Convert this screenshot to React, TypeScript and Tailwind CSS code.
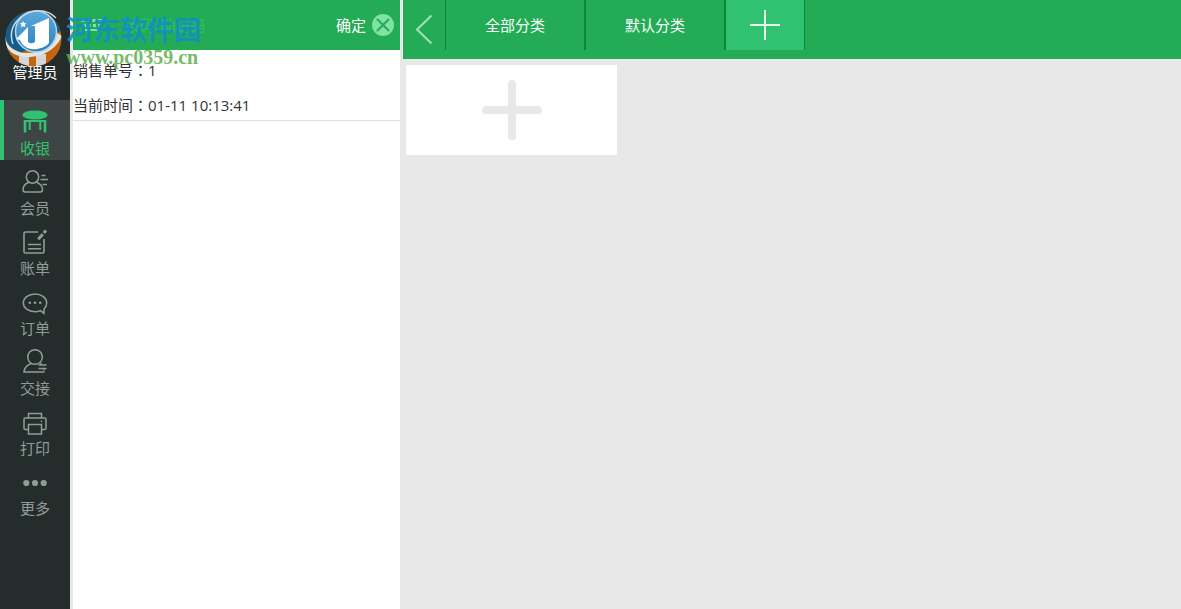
import React, { useState } from 'react';

interface IconProps {
  className?: string;
}

const TableIcon: React.FC<IconProps> = ({ className }) => (
  <svg className={className} viewBox="0 0 26 26" fill="none" stroke="currentColor" aria-hidden="true">
    <ellipse cx="13" cy="6" rx="12.5" ry="4.5" fill="currentColor" stroke="none" />
    <path d="M2 12h22" strokeWidth="2" />
    <path d="M3 11v12.5M23 11v12.5" strokeWidth="2.6" />
    <path d="M7.7 12v9M18.3 12v9" strokeWidth="2" />
  </svg>
);

const MemberIcon: React.FC<IconProps> = ({ className }) => (
  <svg className={className} viewBox="0 0 26 26" fill="none" stroke="currentColor" strokeWidth="1.5" aria-hidden="true">
    <circle cx="10.5" cy="8" r="6.2" />
    <path d="M7 13.3C3 14.7 1 17.5 1 20.8c0 1.6.8 2.200 2.300 2.200h15c1.500 0 2.200-.6 2.200-2.200 0-3.200-2-6-6-7.500" />
    <path d="M19.5 6.500h4M18.500 10.500h7.500M20.500 15.500h4.500" />
  </svg>
);

const BillIcon: React.FC<IconProps> = ({ className }) => (
  <svg className={className} viewBox="0 0 26 26" fill="none" stroke="currentColor" strokeWidth="1.6" aria-hidden="true">
    <path d="M16 3H3.300C2.400 3 2 3.400 2 4.200V22.800c0 .8.4 1.200 1.200 1.200h17.600c.8 0 1.200-.4 1.200-1.200V10" />
    <path d="M6 15.500h13M6 19.800h13" />
    <path d="M16.200 10.300L20.800 5.200M21.800 4L24 1.600" strokeWidth="3" />
  </svg>
);

const OrderIcon: React.FC<IconProps> = ({ className }) => (
  <svg className={className} viewBox="0 0 26 26" fill="none" stroke="currentColor" strokeWidth="1.5" aria-hidden="true">
    <path d="M22 24.300l-3.500-2.600c-1.700.7-3.500 1-5.500 1C6.300 22.700 1.300 18.900 1.300 14S6.300 5 13 5s11.700 4 11.700 9c0 2.400-1 4.500-2.700 6z" />
    <g fill="currentColor" stroke="none">
      <circle cx="7.8" cy="13.800" r="1.3" />
      <circle cx="13" cy="13.800" r="1.3" />
      <circle cx="18.2" cy="13.800" r="1.3" />
    </g>
  </svg>
);

const HandoverIcon: React.FC<IconProps> = ({ className }) => (
  <svg className={className} viewBox="0 0 26 26" fill="none" stroke="currentColor" strokeWidth="1.5" aria-hidden="true">
    <circle cx="13" cy="8" r="7.3" />
    <path d="M9.500 14.500C4.500 16 2.300 18.500 2 23h20.500" />
    <path d="M16.500 16h8M16.500 19.500h8M19 13.700v2.300M22 19.500v2" strokeWidth="1.4" />
  </svg>
);

const PrintIcon: React.FC<IconProps> = ({ className }) => (
  <svg className={className} viewBox="0 0 26 26" fill="none" stroke="currentColor" strokeWidth="1.5" aria-hidden="true">
    <path d="M6.500 9V4.500h13V9" />
    <path d="M6 20.500H3.300c-.9 0-1.300-.4-1.300-1.300V10.300C2 9.400 2.400 9 3.300 9h19.400c.9 0 1.300.4 1.300 1.300v8.900c0 .9-.4 1.300-1.300 1.300H20" />
    <path d="M6.500 15.500h13V25h-13z" />
    <circle cx="19.5" cy="12.300" r=".9" fill="currentColor" stroke="none" />
  </svg>
);

const MoreIcon: React.FC<IconProps> = ({ className }) => (
  <svg className={className} viewBox="0 0 26 26" fill="currentColor" aria-hidden="true">
    <circle cx="4.3" cy="14" r="3.1" />
    <circle cx="13" cy="14" r="3.1" />
    <circle cx="21.7" cy="14" r="3.1" />
  </svg>
);

const KeyboardIcon: React.FC<IconProps> = ({ className }) => (
  <svg className={className} viewBox="0 0 22 14" fill="currentColor" aria-hidden="true">
    <path d="M0 1h4v3H0zM6 1h3v3H6zM11 1h4v3h-4zM17 1h4v3h-4zM2 6h3v3H2zM7 6h3v3H7zM12 6h3v3h-3zM17 6h3v3h-3zM4 11h13v2H4z" />
  </svg>
);

const LogoIcon: React.FC<IconProps> = ({ className }) => (
  <svg className={className} viewBox="0 0 58 58" aria-hidden="true">
    <defs>
      <linearGradient id="sky" x1="0" y1="0" x2="0" y2="1">
        <stop offset="0" stopColor="#5aa9de" />
        <stop offset="1" stopColor="#2d80be" />
      </linearGradient>
      <clipPath id="globe">
        <circle cx="28.5" cy="29.5" r="28" />
      </clipPath>
    </defs>
    <g clipPath="url(#globe)">
      <path d="M0 0h58v58H0z" fill="#c4660f" />
      <path d="M0 0h58v20L44 30 16 44 0 36z" fill="#125d8c" />
      <path d="M14 44h10v14H14zM31 45h10v13H31z" fill="#d6d6d6" />
      <path d="M0 28c2 9 9 15 20 16 14 1 27-7 32-20l5 3C52 39 39 48 23 48 11 48 3 43 0 34z" fill="#e4e4e4" />
    </g>
    <circle cx="31" cy="22.5" r="20.5" fill="url(#sky)" stroke="#b9d7ea" strokeWidth="1.5" />
    <path d="M51 9C40-3 20 1 11 13 6 20 5 27 8 35" fill="none" stroke="#c9d8e2" strokeWidth="1.5" />
    <path d="M11 30l12-12v14c0 3 7 3 7 0V17h-4l18-8v25c-4 5-12 7-18 6-5-1-9-4-11-9z" fill="#fff" />
    <path d="M18 12l1.200 2 2.300.3-1.600 1.700.5 2.300-2.200-1-2 1.100.3-2.400-1.700-1.500 2.300-.4z" fill="#fff" />
  </svg>
);

const navItems = [
  { label: '收银', Icon: TableIcon },
  { label: '会员', Icon: MemberIcon },
  { label: '账单', Icon: BillIcon },
  { label: '订单', Icon: OrderIcon },
  { label: '交接', Icon: HandoverIcon },
  { label: '打印', Icon: PrintIcon },
  { label: '更多', Icon: MoreIcon },
];

const categories = ['全部分类', '默认分类'];

const Sidebar: React.FC = () => {
  const [active, setActive] = useState('收银');

  return (
    <aside className="w-[70px] shrink-0 bg-[#252d2c]">
      <div className="flex h-[100px] flex-col items-center justify-end pb-[18px] text-white">
        <span>管理员</span>
      </div>
      <nav>
        {navItems.map(({ label, Icon }) => (
          <button
            key={label}
            type="button"
            onClick={() => setActive(label)}
            className={`flex h-[60px] w-full cursor-pointer flex-col items-center border-l-4 pt-[9px] pr-1 ${
              active === label
                ? 'border-[#30c270] bg-[#3e4645] text-[#30c270]'
                : 'border-transparent text-[#929c97]'
            }`}
          >
            <Icon className="size-[26px]" />
            <span className="mt-[3px]">{label}</span>
          </button>
        ))}
      </nav>
    </aside>
  );
};

const OrderPanel: React.FC = () => {
  const [code, setCode] = useState('');

  return (
    <section className="w-[327px] shrink-0 bg-white">
      <div className="flex h-[50px] items-center bg-[#23ac55] pr-1.5 pl-2 text-white">
        <button type="button" aria-label="键盘" className="shrink-0 cursor-pointer text-[#7fe3a2]">
          <KeyboardIcon className="h-3.5 w-[22px]" />
        </button>
        <input
          type="text"
          aria-label="条码/助记码"
          placeholder="条码/助记码"
          value={code}
          onChange={(e) => setCode(e.target.value)}
          className="ml-[22px] min-w-0 flex-1 bg-transparent outline-none placeholder:text-[#30c06c]"
        />
        <button type="button" className="shrink-0 cursor-pointer">确定</button>
        <button type="button" aria-label="清除" className="ml-1.5 shrink-0 cursor-pointer">
          <svg className="size-[22px]" viewBox="0 0 22 22" aria-hidden="true">
            <circle cx="11" cy="11" r="11" fill="#7fe3a2" />
            <path d="M5.500 5.500l11 11M16.500 5.500l-11 11" stroke="#23ac55" strokeWidth="2" strokeLinecap="round" />
          </svg>
        </button>
      </div>
      <div className="border-b border-[#e0e0e0] pt-2 pb-[3px] text-[#333]">
        <p className="leading-[23px]">
          销售单号<span className="font-['Noto_Sans_CJK_TC',sans-serif]">：</span>1
        </p>
        <p className="mt-[11px] leading-[23px]">
          当前时间<span className="font-['Noto_Sans_CJK_TC',sans-serif]">：</span>01-11 10:13:41
        </p>
      </div>
    </section>
  );
};

const ProductArea: React.FC = () => (
  <main className="min-w-0 flex-1">
    <div className="flex h-[59px] items-start bg-[#23ac55] text-white">
      <button type="button" aria-label="返回" className="flex h-[59px] w-[42px] cursor-pointer items-center justify-center">
        <svg className="h-8 w-5" viewBox="0 0 20 32" fill="none" stroke="#a5dfb9" strokeWidth="2" aria-hidden="true">
          <path d="M17.500 1.500L3 15.500l14.500 14" />
        </svg>
      </button>
      {categories.map((name) => (
        <button
          key={name}
          type="button"
          className="h-[50px] w-[140px] cursor-pointer border-x border-[#078a38]"
        >
          {name}
        </button>
      ))}
      <button
        type="button"
        aria-label="添加分类"
        className="flex h-[50px] w-20 cursor-pointer items-center justify-center border-x border-[#078a38] bg-[#30c270]"
      >
        <svg className="size-[30px]" viewBox="0 0 30 30" stroke="#e9f5ed" strokeWidth="2" aria-hidden="true">
          <path d="M15 0v30M0 15h30" />
        </svg>
      </button>
    </div>
    <div className="flex flex-wrap gap-1.5 px-[3px] py-1.5">
      <button
        type="button"
        aria-label="添加商品"
        className="flex h-[90px] w-[211px] cursor-pointer items-center justify-center bg-white"
      >
        <svg className="size-[60px]" viewBox="0 0 60 60" stroke="#e8e8e8" strokeWidth="8" strokeLinecap="round" aria-hidden="true">
          <path d="M30 4v52M4 30h52" />
        </svg>
      </button>
    </div>
  </main>
);

const Watermark: React.FC = () => (
  <div className="pointer-events-none absolute top-[9px] left-[5px] flex">
    <LogoIcon className="size-[58px]" />
    <div className="ml-[3px]">
      <p className="font-['Noto_Sans_CJK_SC',sans-serif] text-[27px] leading-10 font-bold text-[#1090c4]/90">河东软件园</p>
      <p className="font-['Liberation_Serif',serif] text-xl leading-4 font-bold text-[#5bb04c]/85">www.pc0359.cn</p>
    </div>
  </div>
);

export default function App() {
  return (
    <div className="relative flex min-h-screen gap-[3px] bg-[#e8e8e8] font-['Open_Sans','Noto_Sans_CJK_SC',sans-serif] text-[15px] leading-5">
      <Sidebar />
      <OrderPanel />
      <ProductArea />
      <Watermark />
    </div>
  );
}
